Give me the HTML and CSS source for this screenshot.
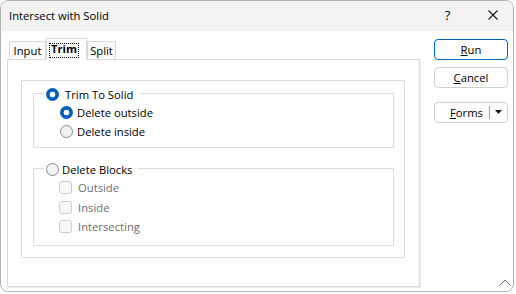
FILE: index.html
```html
<!DOCTYPE html>
<html lang="en">
<head>
    <meta charset="UTF-8">
    <meta name="viewport" content="width=device-width, initial-scale=1.0">
    <title>Intersect with Solid</title>
    <link rel="stylesheet" href="styles.css">
</head>
<body>

    <div class="window">
        <div class="titlebar">
            <span class="title">Intersect with Solid</span>
            <span class="help">?</span>
            <span class="close">
                <svg width="10" height="10" viewBox="0 0 10 10"><path d="M0.5 0.5 L9.5 9.5 M9.5 0.5 L0.5 9.5" stroke="#1b1b1b" stroke-width="1.1" fill="none"/></svg>
            </span>
        </div>

        <div class="client">
            <div class="tabs">
                <div class="tab-strip">
                    <div class="tab tab-input">Input</div>
                    <div class="tab tab-trim active"><span class="focus">Trim</span></div>
                    <div class="tab tab-split">Split</div>
                </div>
                <div class="tab-page">
                    <div class="frame">
                        <div class="group group-trim">
                            <div class="legend"><span class="radio checked"></span>Trim To Solid</div>
                            <div class="row"><span class="radio checked"></span>Delete outside</div>
                            <div class="row"><span class="radio"></span>Delete inside</div>
                        </div>
                        <div class="group group-blocks">
                            <div class="legend tight"><span class="radio"></span>Delete Blocks</div>
                            <div class="row disabled"><span class="check"></span>Outside</div>
                            <div class="row disabled"><span class="check"></span>Inside</div>
                            <div class="row disabled"><span class="check"></span>Intersecting</div>
                        </div>
                    </div>
                </div>
            </div>

            <div class="side">
                <button class="btn default"><span><u>R</u>un</span></button>
                <button class="btn cancel"><span><u>C</u>ancel</span></button>
                <div class="btn forms">
                    <span><u>F</u>orms</span>
                    <span class="sep"></span>
                    <svg width="7" height="4" viewBox="0 0 7 4"><path d="M0 0 L7 0 L3.5 4 Z" fill="#1b1b1b"/></svg>
                </div>
                <svg class="chevron" width="12" height="7" viewBox="0 0 12 7"><path d="M0.5 6.5 L6 1 L11.5 6.5" stroke="#6b6b6b" stroke-width="1" fill="none"/></svg>
            </div>
        </div>
    </div>

</body>
</html>
```

FILE: styles.css
```css
body {
    margin: 0;
    background: #ffffff;
    font-family: "Open Sans", "Noto Sans", sans-serif;
    font-size: 11.25px;
    color: #000000;
}
.window {
    width: 514px;
    height: 292px;
    box-sizing: border-box;
    border: 1px solid #b4b4b4;
    border-radius: 8px;
    overflow: hidden;
    display: flex;
    flex-direction: column;
    background: #ffffff;
}

/* title bar */
.titlebar {
    height: 30px;
    flex: none;
    display: flex;
    align-items: center;
    padding-bottom: 2px;
    box-sizing: border-box;
    background: #f3f3f3;
}
.title {
    flex: 1;
    padding-left: 8px;
}
.help {
    width: 49px;
    text-align: center;
    font-size: 13px;
}
.close {
    width: 41px;
    display: flex;
    justify-content: center;
}

/* client area */
.client {
    flex: 1;
    display: flex;
    padding: 7px 0 0 6px;
}
.tabs {
    width: 413px;
    flex: none;
    display: flex;
    flex-direction: column;
}
.tab-strip {
    display: flex;
    align-items: flex-end;
    height: 21px;
    padding-left: 2px;
}
.tab {
    box-sizing: border-box;
    height: 18px;
    padding-bottom: 1px;
    border: 1px solid #d9d9d9;
    border-bottom: none;
    background: #fafafa;
    display: flex;
    align-items: center;
    justify-content: center;
}
.tab-input {
    width: 37px;
}
.tab-trim {
    width: 41px;
}
.tab-split {
    width: 29px;
}
.tab.active {
    height: 22px;
    margin-bottom: -1px;
    position: relative;
    z-index: 1;
    background: #ffffff;
    align-items: flex-start;
    justify-content: flex-start;
    padding: 4px 0 0 2px;
    font-weight: bold;
}
.focus {
    box-sizing: border-box;
    height: 15px;
    line-height: 10px;
    padding: 0 1px;
    border: 1px dotted #000000;
}
.tab-page {
    box-sizing: border-box;
    height: 228px;
    border: 1px solid #d9d9d9;
    box-shadow: 1px 1px 0 #ededed;
    padding: 20px 0 0 13px;
}

/* group boxes */
.frame {
    width: 384px;
    box-sizing: border-box;
    border: 1px solid #dcdcdc;
    padding: 12px 0 11px 11px;
}
.group {
    width: 361px;
    box-sizing: border-box;
    border: 1px solid #dcdcdc;
}
.group-trim {
    padding-bottom: 6px;
}
.group-blocks {
    margin-top: 20px;
    padding-bottom: 8.5px;
}
.legend {
    display: flex;
    align-items: center;
    gap: 6px;
    width: fit-content;
    height: 16px;
    margin: -8px 0 0 10px;
    padding: 0 6px 0 2px;
    background: #ffffff;
}
.legend.tight {
    gap: 3px;
}
.row {
    display: flex;
    align-items: center;
    gap: 4px;
    height: 19px;
    padding-left: 26px;
}
.group-trim .legend + .row {
    margin-top: 1px;
}
.row.disabled {
    height: 19.5px;
    gap: 6px;
    padding-left: 25px;
    color: #6d6d6d;
}
.group-blocks .legend + .row {
    margin-top: 1px;
}
.radio {
    width: 13px;
    height: 13px;
    box-sizing: border-box;
    border-radius: 50%;
    border: 1px solid #8a8a8a;
    background: #f3f3f3;
    flex: none;
}
.radio.checked {
    border: none;
    background: radial-gradient(circle, #ffffff 0 2.6px, #005fb8 3.2px);
}
.check {
    width: 13px;
    height: 13px;
    box-sizing: border-box;
    border-radius: 3px;
    border: 1px solid #cdcdcd;
    background: #f7f7f7;
    flex: none;
}

/* buttons */
.side {
    flex: 1;
    display: flex;
    flex-direction: column;
    padding: 1px 0 0 14px;
}
.btn {
    box-sizing: border-box;
    width: 74px;
    height: 21px;
    margin: 0;
    padding: 0 0 1px 0;
    border: 1px solid #d0d0d0;
    border-radius: 4px;
    background: #fdfdfd;
    font: inherit;
    color: #000000;
    display: flex;
    align-items: center;
    justify-content: center;
}
.btn.default {
    border-color: #0067c0;
}
.btn.cancel {
    margin-top: 7px;
}
.btn.forms {
    margin-top: 14px;
    justify-content: flex-end;
    padding-right: 5px;
}
.sep {
    width: 1px;
    height: 13px;
    background: #a0a0a0;
    margin: 0 5px 0 6px;
}
.chevron {
    margin: auto 2px 5px 0;
    align-self: flex-end;
}
```
